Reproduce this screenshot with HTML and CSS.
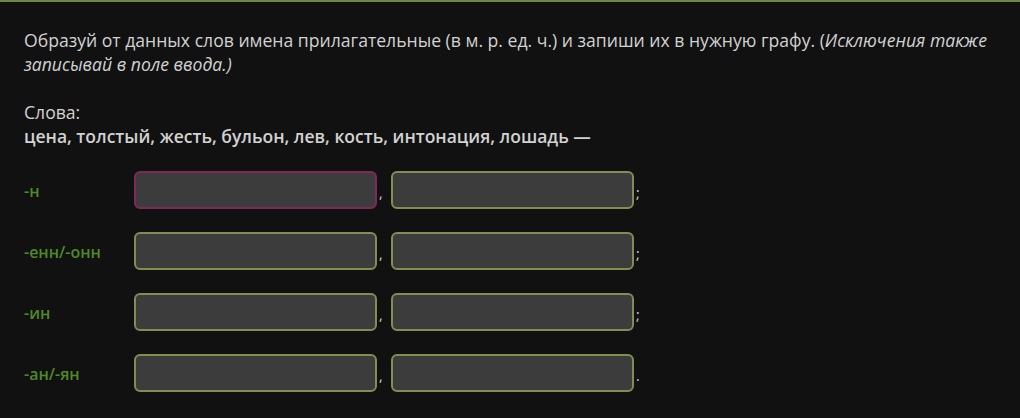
FILE: index.html
```html
<!DOCTYPE html>
<html lang="ru">
<head>
  <meta charset="UTF-8">
  <title>Прилагательные</title>
  <link rel="stylesheet" href="styles.css">
</head>
<body>

  <div class="task">
    <p class="question">
      Образуй от данных слов имена прилагательные (в м. р. ед. ч.) и запиши их в нужную графу. (<i>Исключения также записывай в поле ввода.)</i>
    </p>

    <p class="words">
      Слова:<br>
      <b>цена, толстый, жесть, бульон, лев, кость, интонация, лошадь —</b>
    </p>

    <div class="rows">
      <div class="row">
        <span class="suffix">-н</span>
        <input type="text" class="field wrong">
        <span class="sep">,</span>
        <input type="text" class="field">
        <span class="sep">;</span>
      </div>
      <div class="row">
        <span class="suffix">-енн/-онн</span>
        <input type="text" class="field">
        <span class="sep">,</span>
        <input type="text" class="field">
        <span class="sep">;</span>
      </div>
      <div class="row">
        <span class="suffix">-ин</span>
        <input type="text" class="field">
        <span class="sep">,</span>
        <input type="text" class="field">
        <span class="sep">;</span>
      </div>
      <div class="row">
        <span class="suffix">-ан/-ян</span>
        <input type="text" class="field">
        <span class="sep">,</span>
        <input type="text" class="field">
        <span class="sep">.</span>
      </div>
    </div>
  </div>

</body>
</html>
```

FILE: styles.css
```css
body {
  margin: 0;
  background: #111111;
  color: #d2d2d2;
  font-family: "Open Sans", "Noto Sans", sans-serif;
  font-size: 17.6px;
  line-height: 24px;
}
.task {
  border-top: 2px solid #6b8a3c;
  padding: 26px 24px 0;
}
.question {
  margin: 0 0 24px;
}
.words {
  margin: 0 0 23px;
}
.words b {
  font-weight: 600;
  font-size: 17.5px;
}
.rows {
  display: flex;
  flex-direction: column;
  gap: 23px;
}
.row {
  display: flex;
  align-items: center;
  height: 38px;
}
.suffix {
  width: 110px;
  padding-top: 2px;
  color: #4f8a25;
  font-weight: 600;
  font-size: 16px;
}
.field {
  box-sizing: border-box;
  width: 243px;
  height: 38px;
  margin: 0;
  background: #3c3c3c;
  border: 2px solid #7f8f52;
  border-radius: 6px;
  outline: none;
  color: #d2d2d2;
}
.field.wrong {
  border-color: #7e2a58;
}
.sep {
  width: 14px;
  padding-left: 2px;
  font-size: 14px;
  line-height: 38px;
  padding-top: 6px;
  box-sizing: border-box;
}
```
